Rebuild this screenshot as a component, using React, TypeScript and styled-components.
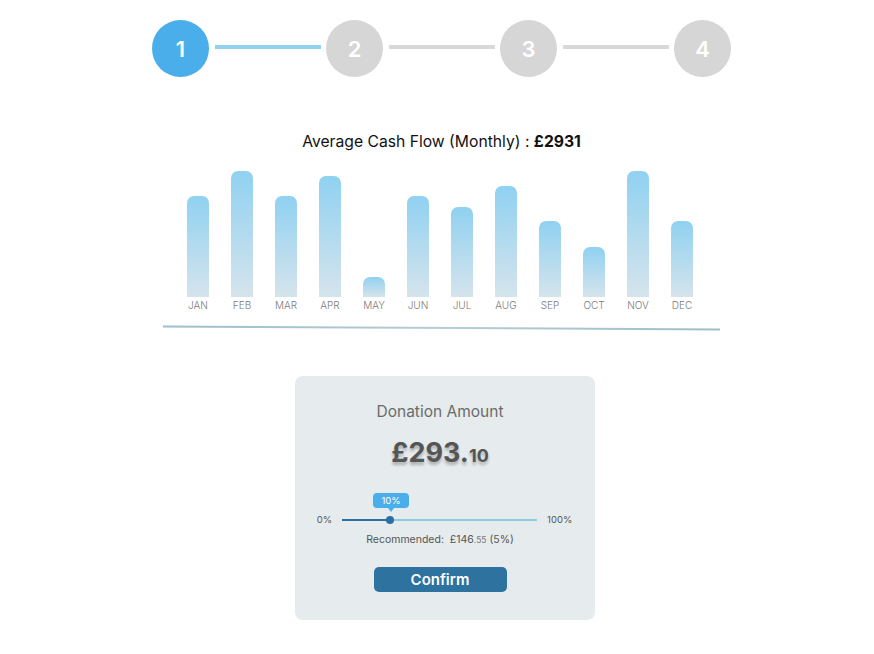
import React from "react";
import styled, { createGlobalStyle } from "styled-components";

const GlobalStyle = createGlobalStyle`
  html, body { margin: 0; padding: 0; background: #ffffff; }
  body { font-family: Inter, "Noto Sans", "Liberation Sans", sans-serif; }
`;

const Page = styled.div`
  display: flex;
  flex-direction: column;
  align-items: center;
  padding: 20px 0 0 9px;
`;

const Stepper = styled.div`
  display: flex;
  align-items: center;
`;

const StepCircle = styled.div<{ $active?: boolean }>`
  width: 57px;
  height: 57px;
  border-radius: 50%;
  background: ${(p) => (p.$active ? "#4aaeea" : "#d6d6d6")};
  color: #ffffff;
  display: flex;
  align-items: center;
  justify-content: center;
  font-size: 22px;
  font-weight: 600;
`;

const Connector = styled.div<{ $done?: boolean }>`
  width: 106px;
  height: 4px;
  margin: 0 5px 0 6px;
  background: ${(p) => (p.$done ? "#8fd3f1" : "#d8d8d8")};
  transform: translateY(-2px);
`;

const Title = styled.div`
  margin-top: 56px;
  font-size: 15.7px;
  line-height: 18px;
  color: #111;
`;

const Strong = styled.b`
  font-weight: 700;
`;

const Chart = styled.div`
  margin-top: 20px;
  display: flex;
  gap: 22px;
  margin-right: 3px;
`;

const BarColumn = styled.div`
  width: 22px;
  display: flex;
  flex-direction: column;
  align-items: center;
`;

const BarArea = styled.div`
  height: 126px;
  width: 22px;
  display: flex;
  align-items: flex-end;
`;

const Bar = styled.div`
  width: 22px;
  border-radius: 7px 7px 0 0;
  background: linear-gradient(to bottom, #90d1f1, #d5e4ec);
`;

const BarLabel = styled.div`
  margin-top: 2px;
  font-size: 10px;
  line-height: 12px;
  font-weight: 300;
  color: #7a7a7a;
  white-space: nowrap;
`;

const Divider = styled.div`
  margin-top: 16px;
  width: 557px;
  height: 2px;
  background: linear-gradient(to right, #9bbfcb, #b4ccd5 50%, #9cbfcb);
  transform: rotate(0.3deg);
`;

const Card = styled.div`
  margin-top: 47px;
  margin-left: 7px;
  width: 300px;
  box-sizing: border-box;
  padding: 27px 10px 28px 0;
  background: #e6ebed;
  border-radius: 8px;
  display: flex;
  flex-direction: column;
  align-items: center;
`;

const CardLabel = styled.div`
  font-size: 15.5px;
  line-height: 18px;
  color: #6b6b6b;
`;

const Amount = styled.div`
  margin-top: 16px;
  font-size: 27px;
  line-height: 32px;
  font-weight: 700;
  color: #555;
  text-shadow: 0 3px 3px rgba(0, 0, 0, 0.25);
`;

const AmountCents = styled.span`
  font-size: 18px;
`;

const SliderRow = styled.div`
  margin-top: 42px;
  margin-right: -9px;
  display: flex;
  align-items: center;
  gap: 10px;
  font-size: 9.5px;
  line-height: 12px;
  color: #555;
`;

const Track = styled.div`
  position: relative;
  width: 195px;
  height: 2px;
  background: #8fcbe0;
`;

const TrackFill = styled.div`
  position: absolute;
  left: 0;
  top: 0;
  height: 2px;
  background: #2d6f9e;
`;

const Thumb = styled.div`
  position: absolute;
  top: -3px;
  width: 8px;
  height: 8px;
  margin-left: -4px;
  border-radius: 50%;
  background: #2d6f9e;
`;

const Bubble = styled.div`
  position: absolute;
  bottom: 13px;
  width: 36px;
  height: 15px;
  margin-left: -17px;
  border-radius: 4px;
  background: #4aaeea;
  color: #fff;
  font-size: 9.5px;
  line-height: 15px;
  text-align: center;
  &::after {
    content: "";
    position: absolute;
    left: 50%;
    bottom: -4px;
    margin-left: -3px;
    border-left: 3px solid transparent;
    border-right: 3px solid transparent;
    border-top: 4px solid #4aaeea;
  }
`;

const Recommended = styled.div`
  margin-top: 7px;
  font-size: 10.5px;
  line-height: 14px;
  color: #555;
  white-space: pre;
`;

const Small = styled.span`
  font-size: 8.5px;
  color: #777;
`;

const ConfirmButton = styled.button`
  margin-top: 20px;
  width: 133px;
  height: 25px;
  border: none;
  border-radius: 5px;
  background: #2e72a0;
  color: #fff;
  font-family: inherit;
  font-size: 15px;
  font-weight: 600;
  line-height: 25px;
  padding: 0;
  cursor: pointer;
`;

const months = [
  { m: "JAN", h: 101 },
  { m: "FEB", h: 126 },
  { m: "MAR", h: 101 },
  { m: "APR", h: 121 },
  { m: "MAY", h: 20 },
  { m: "JUN", h: 101 },
  { m: "JUL", h: 90 },
  { m: "AUG", h: 111 },
  { m: "SEP", h: 76 },
  { m: "OCT", h: 50 },
  { m: "NOV", h: 126 },
  { m: "DEC", h: 76 },
];

export default function App() {
  const thumbX = 48;
  return (
    <>
      <GlobalStyle />
      <Page>
        <Stepper>
          <StepCircle $active>1</StepCircle>
          <Connector $done />
          <StepCircle>2</StepCircle>
          <Connector />
          <StepCircle>3</StepCircle>
          <Connector />
          <StepCircle>4</StepCircle>
        </Stepper>

        <Title>
          Average Cash Flow (Monthly) : <Strong>£2931</Strong>
        </Title>

        <Chart>
          {months.map((d) => (
            <BarColumn key={d.m}>
              <BarArea>
                <Bar style={{ height: d.h }} />
              </BarArea>
              <BarLabel>{d.m}</BarLabel>
            </BarColumn>
          ))}
        </Chart>

        <Divider />

        <Card>
          <CardLabel>Donation Amount</CardLabel>
          <Amount>
            £293.<AmountCents>10</AmountCents>
          </Amount>
          <SliderRow>
            <span>0%</span>
            <Track>
              <TrackFill style={{ width: thumbX }} />
              <Thumb style={{ left: thumbX }} />
              <Bubble style={{ left: thumbX }}>10%</Bubble>
            </Track>
            <span>100%</span>
          </SliderRow>
          <Recommended>
            Recommended:  £146<Small>.55</Small> (5%)
          </Recommended>
          <ConfirmButton>Confirm</ConfirmButton>
        </Card>
      </Page>
    </>
  );
}
